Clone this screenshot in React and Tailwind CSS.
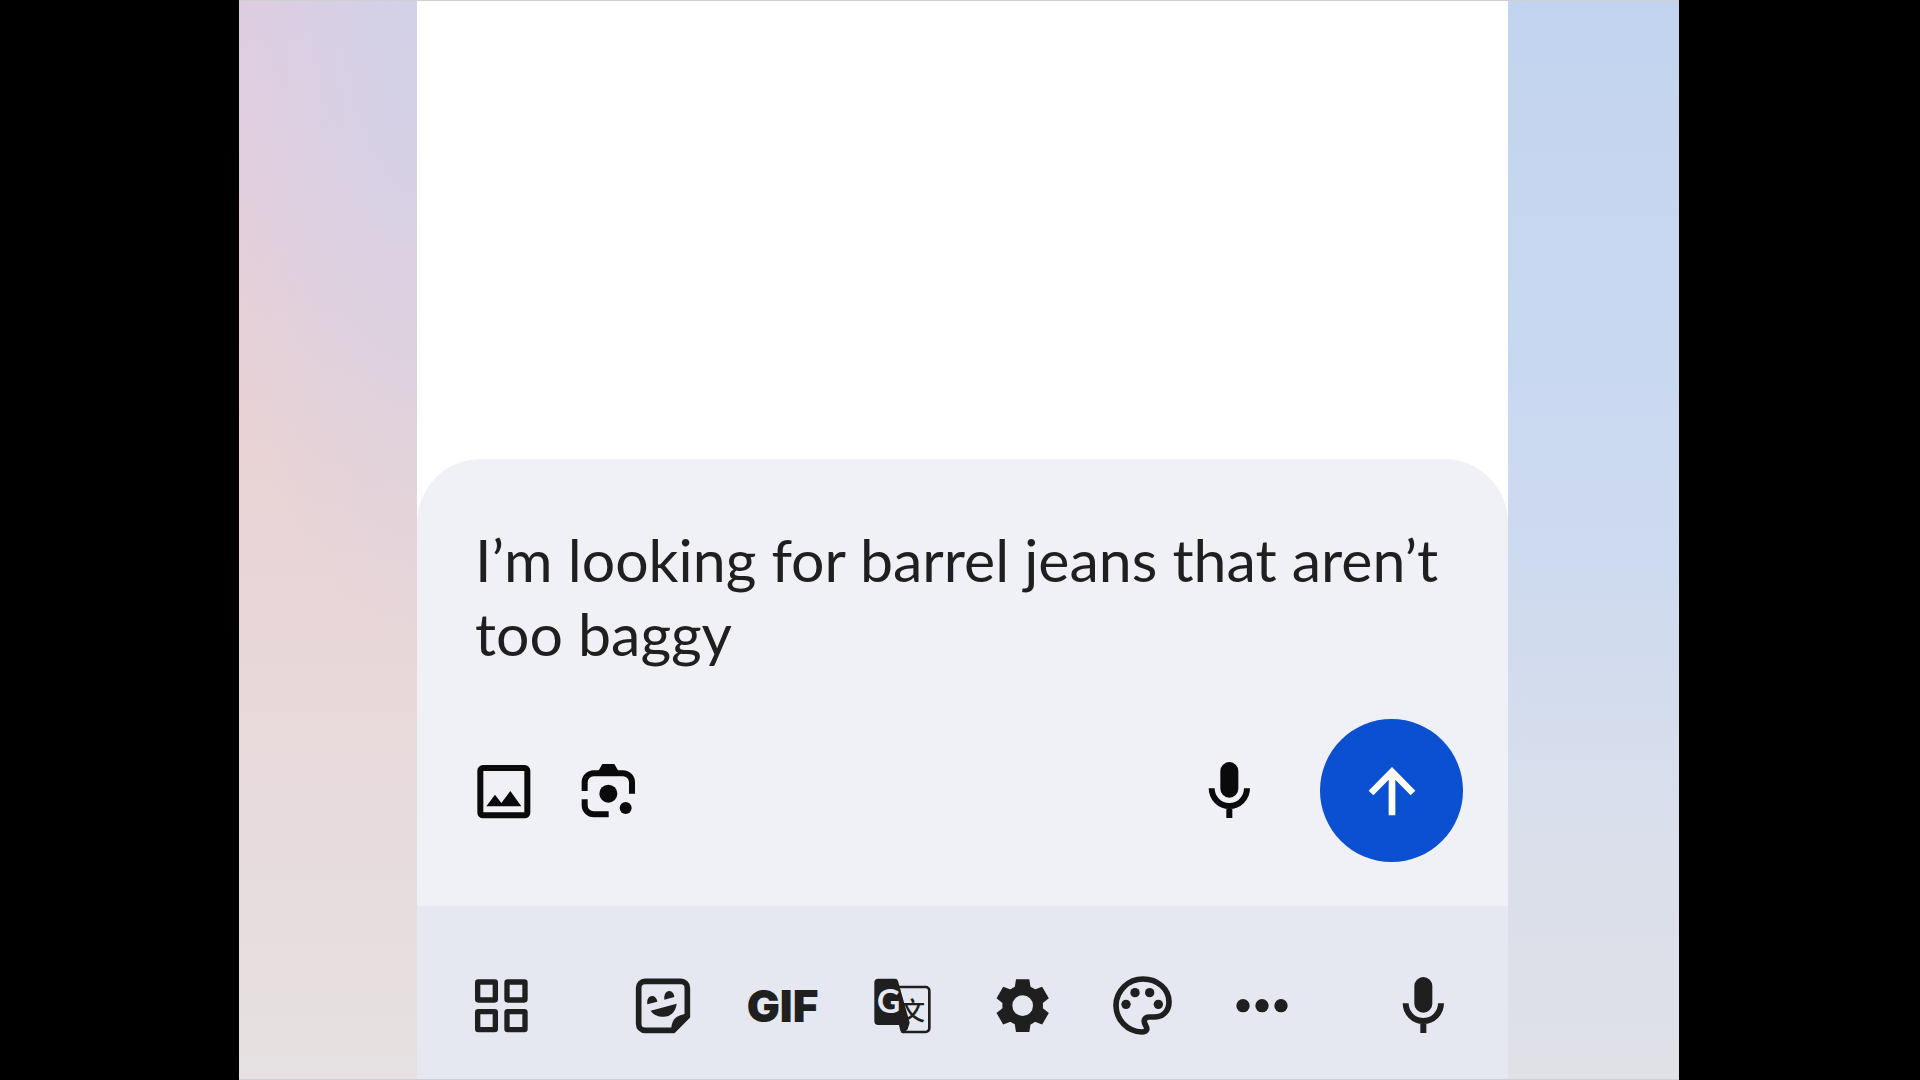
import { useState } from "react";

function Icon({ children }) {
  return (
    <svg viewBox="0 0 180 180" className="size-15 shrink-0" fill="none" aria-hidden="true">
      {children}
    </svg>
  );
}

function IconButton({ label, children }) {
  return (
    <button type="button" aria-label={label} className="flex size-15 shrink-0 items-center justify-center">
      {children}
    </button>
  );
}

function ImageIcon() {
  return (
    <Icon>
      <rect x="28" y="21" width="141" height="142" rx="8" stroke="currentColor" strokeWidth="18" />
      <path d="M46 136 72 101 91 126 118 90 151 136Z" fill="currentColor" />
    </Icon>
  );
}

function LensIcon() {
  return (
    <Icon>
      <path
        d="M17 90V64a27 27 0 0 1 27-27H132a27 27 0 0 1 27 27V98M17 115v18a27 27 0 0 0 27 27H89"
        stroke="currentColor"
        strokeWidth="18"
      />
      <path d="M70 9H106L118 30H58Z" fill="currentColor" />
      <circle cx="88" cy="98" r="27" fill="currentColor" />
      <circle cx="140" cy="141" r="18" fill="currentColor" />
    </Icon>
  );
}

function MicIcon() {
  return (
    <Icon>
      <rect x="61" y="3" width="54" height="107" rx="27" fill="currentColor" />
      <path d="M35 82a53 53 0 0 0 106 0M88 135v36" stroke="currentColor" strokeWidth="18" />
    </Icon>
  );
}

function ArrowUpIcon() {
  return (
    <Icon>
      <path d="M90 163V34M27 96 90 32 153 96" stroke="currentColor" strokeWidth="20" />
    </Icon>
  );
}

function GridIcon() {
  return (
    <Icon>
      <g stroke="currentColor" strokeWidth="16">
        <rect x="20" y="18" width="53" height="54" rx="2" />
        <rect x="108" y="18" width="54" height="54" rx="2" />
        <rect x="20" y="107" width="53" height="54" rx="2" />
        <rect x="108" y="107" width="54" height="54" rx="2" />
      </g>
    </Icon>
  );
}

function StickerIcon() {
  return (
    <Icon>
      <path
        d="M36 16H144a19 19 0 0 1 19 19V121L121 163H36a19 19 0 0 1-19-19V35a19 19 0 0 1 19-19Z"
        stroke="currentColor"
        strokeWidth="17"
      />
      <path d="M167 113C133 114 113 128 115 167H124L167 124Z" fill="currentColor" />
      <path d="M43 85C39 53 70 53 73 77Z M94 71C91 38 122 38 124 63Z" fill="currentColor" />
      <path d="M53 104 131 83C128 108 112 122 92 122C74 122 61 116 53 104Z" fill="currentColor" />
    </Icon>
  );
}

function TranslateIcon() {
  return (
    <Icon>
      <path d="M78 33H158a11 11 0 0 1 11 11V157a11 11 0 0 1-11 11H90" stroke="currentColor" strokeWidth="8" />
      <path
        d="M16 8H66Q73 8 75 15L110 140 104 160 92 172Q84 172 82 164L78 147H16Q4 147 4 135V20Q4 8 16 8Z"
        fill="currentColor"
      />
      <text x="47" y="112" textAnchor="middle" fontSize="96" className="fill-[#e5e8f0] font-[Lato,sans-serif] font-bold">
        G
      </text>
      <text
        x="118"
        y="132"
        textAnchor="middle"
        fontSize="76"
        className="fill-[#1f1f1f] font-['Noto_Sans_CJK_SC',sans-serif] font-medium"
      >
        文
      </text>
    </Icon>
  );
}

function GearIcon() {
  return (
    <Icon>
      <circle cx="89" cy="89" r="46" stroke="currentColor" strokeWidth="30" />
      {[0, 60, 120, 180, 240, 300].map((angle) => (
        <path
          key={angle}
          d="M69 10H109L114 42H64Z"
          fill="currentColor"
          transform={`rotate(${angle} 89 89)`}
        />
      ))}
    </Icon>
  );
}

function PaletteIcon() {
  return (
    <Icon>
      <path
        d="M86 168A80 80 0 0 1 9 88A81 80 0 0 1 90 9C135 9 168 40 168 78C168 105 150 123 124 123H108C97 123 91 131 95 142C98 150 103 154 101 161C98 168 92 168 86 168Z"
        stroke="currentColor"
        strokeWidth="17"
      />
      <g fill="currentColor">
        <circle cx="39" cy="85" r="14" />
        <circle cx="66" cy="50" r="14" />
        <circle cx="110" cy="50" r="14" />
        <circle cx="136" cy="85" r="14" />
      </g>
    </Icon>
  );
}

function MoreIcon() {
  return (
    <Icon>
      <g fill="currentColor">
        <circle cx="30" cy="89" r="20" />
        <circle cx="87" cy="89" r="20" />
        <circle cx="144" cy="89" r="20" />
      </g>
    </Icon>
  );
}

function SearchCard() {
  const [query, setQuery] = useState("I’m looking for barrel jeans that aren’t too baggy");

  return (
    <form
      onSubmit={(e) => e.preventDefault()}
      className="rounded-t-[64px] bg-[#f0f1f6] pt-16 pr-[45px] pb-11 pl-[54px] text-[#0a0a0a]"
    >
      <textarea
        aria-label="Search"
        rows={2}
        value={query}
        onChange={(e) => setQuery(e.target.value)}
        className="block w-full resize-none overflow-hidden bg-transparent pl-1 font-[Lato,sans-serif] text-[59px] leading-[74px] text-[#1f1f1f] outline-none"
      />
      <div className="mt-12 flex items-center justify-between">
        <div className="flex items-center gap-12">
          <IconButton label="Add image">
            <ImageIcon />
          </IconButton>
          <IconButton label="Search with Lens">
            <LensIcon />
          </IconButton>
        </div>
        <div className="flex items-center gap-15">
          <IconButton label="Voice search">
            <MicIcon />
          </IconButton>
          <button
            type="submit"
            aria-label="Send"
            className="flex size-[143px] items-center justify-center rounded-full bg-[#0b50d0] text-white"
          >
            <ArrowUpIcon />
          </button>
        </div>
      </div>
    </form>
  );
}

function KeyboardBar() {
  return (
    <div className="flex items-center justify-between bg-[#e5e8f0] px-[54px] pt-[70px] pb-[43px] text-[#1f1f1f]">
      <IconButton label="Keyboard tools">
        <GridIcon />
      </IconButton>
      <div className="flex items-center gap-15">
        <IconButton label="Stickers">
          <StickerIcon />
        </IconButton>
        <IconButton label="GIFs">
          <span className="font-[Inter,sans-serif] text-[44px] leading-none font-black">GIF</span>
        </IconButton>
        <IconButton label="Translate">
          <TranslateIcon />
        </IconButton>
        <IconButton label="Settings">
          <GearIcon />
        </IconButton>
        <IconButton label="Themes">
          <PaletteIcon />
        </IconButton>
        <IconButton label="More">
          <MoreIcon />
        </IconButton>
      </div>
      <IconButton label="Voice typing">
        <MicIcon />
      </IconButton>
    </div>
  );
}

export default function App() {
  return (
    <div className="flex min-h-screen justify-center bg-black pr-0.5">
      <main className="grid w-[1440px] max-w-full grid-cols-[178fr_1091fr_171fr] border-y border-[#cfd0d6]">
        <div className="bg-[radial-gradient(ellipse_120%_60%_at_100%_0%,#d2d1e8,transparent),linear-gradient(to_bottom,#e0cce0,#e6cfd8_25%,#e9d3d5_42%,#e8d8da_65%,#e6e1e2)]" />
        <section className="flex flex-col bg-white">
          <div className="flex-1" />
          <SearchCard />
          <KeyboardBar />
        </section>
        <div className="bg-[linear-gradient(to_bottom,#c3d4f0,#c9d8f1_35%,#d0dbee_58%,#dadfeb_78%,#e0e1e7)]" />
      </main>
    </div>
  );
}
